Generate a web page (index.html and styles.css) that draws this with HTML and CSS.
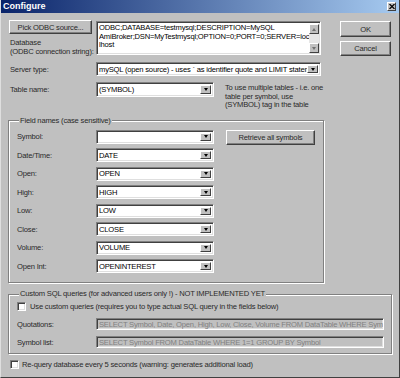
FILE: index.html
```html
<!DOCTYPE html>
<html lang="en">
<head>
    <meta charset="UTF-8">
    <title>Configure</title>
    <link rel="stylesheet" href="styles.css">
</head>
<body>
    <div class="window">
        <div class="titlebar">
            <span class="title">Configure</span>
            <span class="close">
                <svg width="6" height="5" viewBox="0 0 6 5"><path d="M0.5 0 L5.5 5 M5.5 0 L0.5 5" stroke="#000" stroke-width="1.2"/></svg>
            </span>
        </div>
        <div class="client">
            <div class="top">
                <div class="main">
                    <div class="row odbc">
                        <div class="odbc-left">
                            <button class="btn pick">Pick ODBC source...</button>
                            <div class="db-label">Database<br>(ODBC connection string):</div>
                        </div>
                        <div class="memo sunken">
                            <div class="memo-text">
                                <div>ODBC;DATABASE=testmysql;DESCRIPTION=MySQL</div>
                                <div>AmiBroker;DSN=MyTestmysql;OPTION=0;PORT=0;SERVER=loca</div>
                                <div>lhost</div>
                            </div>
                            <div class="vscroll">
                                <span class="sbtn"><i class="arrow up"></i></span>
                                <span class="track"></span>
                                <span class="sbtn"><i class="arrow down grey"></i></span>
                            </div>
                        </div>
                    </div>
                    <div class="row server">
                        <label class="lbl">Server type:</label>
                        <div class="combo sunken">
                            <span class="value">mySQL (open source) - uses ` as identifier quote and LIMIT statement</span>
                            <span class="drop"><i class="arrow down"></i></span>
                        </div>
                    </div>
                    <div class="row table">
                        <label class="lbl">Table name:</label>
                        <div class="combo sunken">
                            <span class="value">(SYMBOL)</span>
                            <span class="drop"><i class="arrow down"></i></span>
                        </div>
                        <p class="hint">To use multiple tables - i.e. one<br>table per symbol, use<br>(SYMBOL) tag in the table</p>
                    </div>
                    <fieldset class="group fields">
                        <legend>Field names (case sensitive)</legend>
                        <div class="fields-grid">
                            <button class="btn retrieve">Retrieve all symbols</button>

                            <label class="flbl">Symbol:</label>
                            <div class="combo sunken"><span class="value"></span><span class="drop"><i class="arrow down"></i></span></div>
                            <label class="flbl">Date/Time:</label>
                            <div class="combo sunken"><span class="value">DATE</span><span class="drop"><i class="arrow down"></i></span></div>
                            <label class="flbl">Open:</label>
                            <div class="combo sunken"><span class="value">OPEN</span><span class="drop"><i class="arrow down"></i></span></div>
                            <label class="flbl">High:</label>
                            <div class="combo sunken"><span class="value">HIGH</span><span class="drop"><i class="arrow down"></i></span></div>
                            <label class="flbl">Low:</label>
                            <div class="combo sunken"><span class="value">LOW</span><span class="drop"><i class="arrow down"></i></span></div>
                            <label class="flbl">Close:</label>
                            <div class="combo sunken"><span class="value">CLOSE</span><span class="drop"><i class="arrow down"></i></span></div>
                            <label class="flbl">Volume:</label>
                            <div class="combo sunken"><span class="value">VOLUME</span><span class="drop"><i class="arrow down"></i></span></div>
                            <label class="flbl">Open Int:</label>
                            <div class="combo sunken"><span class="value">OPENINTEREST</span><span class="drop"><i class="arrow down"></i></span></div>
                        </div>
                    </fieldset>
                </div>
                <div class="side">
                    <button class="btn ok">OK</button>
                    <button class="btn cancel">Cancel</button>
                </div>
            </div>

            <fieldset class="group custom">
                <legend>Custom SQL queries (for advanced users only !) - NOT IMPLEMENTED YET</legend>
                <div class="check-row">
                    <span class="check sunken"></span>
                    <span>Use custom queries (requires you to type actual SQL query in the fields below)</span>
                </div>
                <div class="sql-grid">
                    <label class="flbl">Quotations:</label>
                    <div class="edit sunken">SELECT Symbol, Date, Open, High, Low, Close, Volume FROM DataTable WHERE Sym</div>
                    <label class="flbl">Symbol list:</label>
                    <div class="edit sunken">SELECT Symbol FROM DataTable WHERE 1=1 GROUP BY Symbol</div>
                </div>
            </fieldset>

            <div class="check-row requery">
                <span class="check sunken"></span>
                <span>Re-query database every 5 seconds (warning: generates additional load)</span>
            </div>
        </div>
    </div>
</body>
</html>
```

FILE: styles.css
```css
body {
    margin: 0;
    font-family: "Liberation Sans", Arial, sans-serif;
    font-size: 7.6px;
    letter-spacing: -0.2px;
    line-height: 9px;
    color: #2a2a2a;
    background: #c0c0c0;
}
.window {
    width: 400px;
    height: 378px;
    box-sizing: border-box;
    background: #c0c0c0;
    border-left: 1px solid #dfdfdf;
    border-right: 1px solid #404040;
    border-bottom: 1px solid #404040;
    overflow: hidden;
}
.titlebar {
    height: 13px;
    display: flex;
    align-items: center;
    justify-content: space-between;
    padding: 0 3px 0 2px;
    background: linear-gradient(to right, #0a246a, #a6caf0);
}
.title {
    color: #fff;
    font-weight: bold;
    font-size: 9px;
    letter-spacing: 0;
}
.close {
    width: 9px;
    height: 9px;
    box-sizing: border-box;
    background: #c0c0c0;
    border: 1px solid;
    border-color: #fff #404040 #404040 #fff;
    display: flex;
    align-items: center;
    justify-content: center;
}
.client {
    padding: 7px 7px 0 7px;
}
.top {
    display: flex;
}
.main {
    width: 316px;
}
.side {
    margin-left: 16px;
    padding-top: 1px;
    display: flex;
    flex-direction: column;
    gap: 4px;
}

/* classic 3d borders */
.btn {
    font: inherit;
    letter-spacing: inherit;
    color: inherit;
    background: #c0c0c0;
    border: 1px solid;
    border-color: #fff #404040 #404040 #fff;
    box-shadow: inset -1px -1px 0 #808080;
    padding: 0;
    box-sizing: border-box;
}
.sunken {
    border: 1px solid;
    border-color: #808080 #fff #fff #808080;
    box-shadow: inset 1px 1px 0 #404040, inset -1px -1px 0 #dfdfdf;
    box-sizing: border-box;
}
.ok {
    width: 51px;
    height: 16px;
}
.cancel {
    width: 51px;
    height: 15px;
}

.row {
    display: grid;
    align-items: center;
}
.lbl {
    padding-left: 2px;
}
.odbc {
    grid-template-columns: 88px 225px;
    align-items: start;
}
.pick {
    display: block;
    width: 83px;
    height: 14px;
    margin-left: 1px;
}
.db-label {
    margin-top: 4px;
    padding-left: 2px;
    line-height: 9px;
}
.memo {
    margin-top: 1px;
    height: 34px;
    background: #fff;
    display: flex;
    padding: 2px 1px 1px 2px;
}
.memo-text {
    flex: 1;
    line-height: 8.7px;
    white-space: nowrap;
    overflow: hidden;
    color: #000;
}
.vscroll {
    width: 10px;
    display: flex;
    flex-direction: column;
}
.sbtn {
    height: 10px;
    box-sizing: border-box;
    background: #c0c0c0;
    border: 1px solid;
    border-color: #fff #404040 #404040 #fff;
    display: flex;
    align-items: center;
    justify-content: center;
}
.track {
    flex: 1;
    background: #e6e6e6;
}
.arrow {
    width: 0;
    height: 0;
    border-left: 2.5px solid transparent;
    border-right: 2.5px solid transparent;
}
.arrow.down {
    border-top: 3px solid #000;
}
.arrow.up {
    border-bottom: 3px solid #707070;
}
.arrow.grey {
    border-top-color: #707070;
}

.server {
    margin-top: 6px;
    grid-template-columns: 88px 225px;
}
.table {
    margin-top: 6px;
    grid-template-columns: 88px 118px 1fr;
    align-items: start;
}
.table .lbl {
    height: 15px;
    display: flex;
    align-items: center;
}
.table .combo {
    height: 15px;
}
.hint {
    margin: 2px 0 0 11px;
    line-height: 8.5px;
    white-space: nowrap;
}

.combo {
    height: 14px;
    background: #fff;
    color: #000;
    display: flex;
    align-items: center;
    padding: 2px;
    overflow: hidden;
}
.combo .value {
    flex: 1;
    white-space: nowrap;
    overflow: hidden;
    min-width: 0;
}
.drop {
    width: 11px;
    height: 100%;
    box-sizing: border-box;
    background: #c0c0c0;
    border: 1px solid;
    border-color: #fff #404040 #404040 #fff;
    display: flex;
    align-items: center;
    justify-content: center;
    flex-shrink: 0;
}

.group {
    margin: 0;
    border: 1px solid #808080;
    box-shadow: 1px 1px 0 #fff, inset 1px 1px 0 #fff;
    min-width: 0;
}
.group legend {
    margin-left: 2px;
    padding: 0 1px;
    line-height: 10px;
    background: #c0c0c0;
}
.fields {
    margin-top: 6px;
    padding: 4px 8px 9px 8px;
}
.fields-grid {
    display: grid;
    grid-template-columns: 79px 118px 1fr;
    grid-auto-rows: 14px;
    row-gap: 4.5px;
    align-items: center;
}
.flbl {
    grid-column: 1;
}
.fields-grid .combo {
    grid-column: 2;
}
.retrieve {
    grid-column: 3;
    grid-row: 1;
    align-self: start;
    width: 89px;
    height: 15px;
    margin-left: 12px;
}

.custom {
    margin-top: 6px;
    padding: 3px 7px 5px 8px;
}
.check-row {
    display: flex;
    align-items: center;
    gap: 4px;
    height: 9px;
}
.check {
    width: 9px;
    height: 9px;
    background: #fff;
    flex-shrink: 0;
}
.sql-grid {
    margin-top: 7px;
    display: grid;
    grid-template-columns: 79px 288px;
    grid-auto-rows: 12px;
    row-gap: 6px;
    align-items: center;
}
.edit {
    height: 12px;
    background: #c0c0c0;
    color: #808080;
    padding: 0 2px;
    white-space: nowrap;
    overflow: hidden;
    display: flex;
    align-items: center;
}
.requery {
    margin: 6px 0 0 2px;
    gap: 3px;
}
```
